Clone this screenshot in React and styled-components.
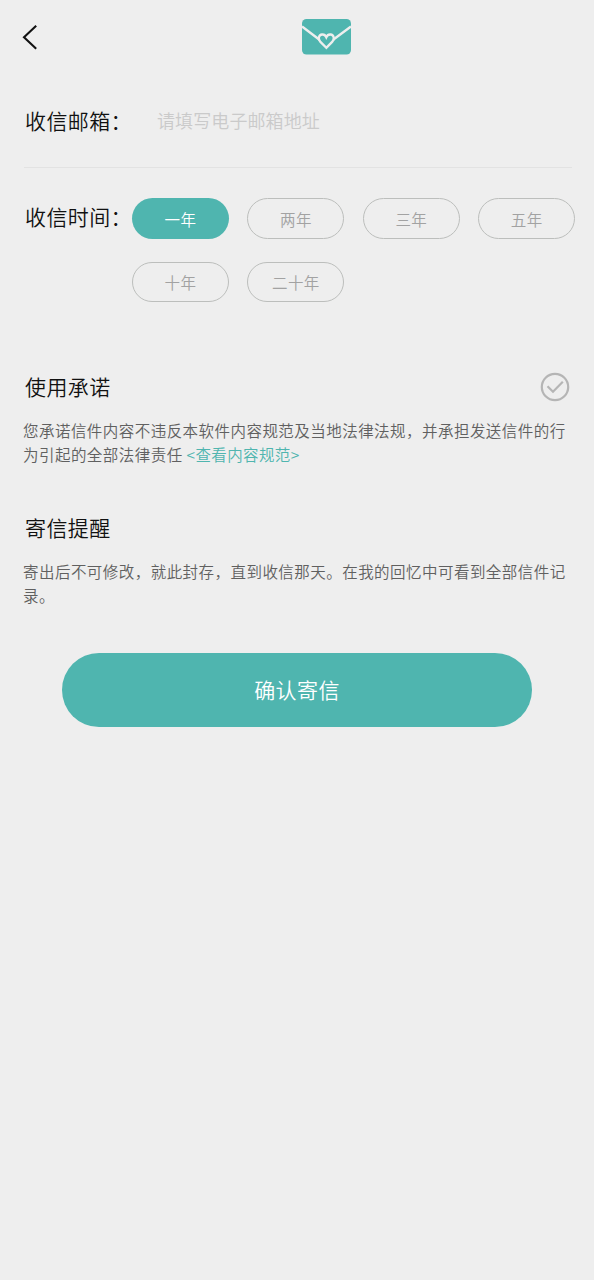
import React, { useState } from "react";
import styled, { createGlobalStyle } from "styled-components";

const GlobalStyle = createGlobalStyle`
  * {
    box-sizing: border-box;
  }
  body {
    margin: 0;
    background-color: #eeeeee;
    font-family: "Noto Sans CJK SC", sans-serif;
  }
`;
const Container = styled.div`
  min-height: 1280px;
  background-color: #eeeeee;
  font-weight: 350;
`;
const Header = styled.header`
  height: 74px;
  display: flex;
  padding: 18px 0 0 22px;
`;
const Back = styled.svg`
  width: 16px;
  height: 28px;
  margin: 5px 264px 0 0;
  cursor: pointer;
`;
const Logo = styled.svg`
  width: 49px;
  height: 37px;
`;
const EmailRow = styled.div`
  height: 94px;
  margin: 0 22px 0 24px;
  padding-bottom: 2px;
  display: flex;
  align-items: center;
  border-bottom: 1px solid #e2e2e2;
`;
const Label = styled.span`
  width: 108px;
  flex: none;
  padding-left: 1px;
  font-size: 21px;
  line-height: 32px;
  letter-spacing: 0.4px;
  white-space: nowrap;
  color: #111;
`;
const Input = styled.input`
  width: 300px;
  height: 32px;
  margin-left: 25px;
  padding: 0;
  border: none;
  outline: none;
  background: transparent;
  font-family: inherit;
  font-size: 18px;
  font-weight: inherit;
  letter-spacing: 0.1px;
  color: #333;
  &::placeholder {
    color: #cacaca;
  }
`;
const TimeRow = styled.div`
  display: flex;
  padding: 30px 0 0 24px;
`;
const TimeLabel = styled(Label)`
  padding-top: 2px;
`;
const Options = styled.div`
  display: grid;
  grid-template-columns: repeat(4, 97px);
  grid-template-rows: 41px 40px;
  gap: 23px 18.4px;
`;
const Option = styled.button`
  padding: 0;
  border: ${(props) => (props.$active ? "none" : "1px solid #bcbebc")};
  border-radius: 21px;
  background-color: ${(props) => (props.$active ? "#4fb5af" : "transparent")};
  color: ${(props) => (props.$active ? "#fff" : "#a2a2a2")};
  font-family: inherit;
  font-size: 15.5px;
  font-weight: inherit;
  letter-spacing: 0.4px;
  cursor: pointer;
`;
const Section = styled.section`
  height: 141px;
  padding: 0 24px 0 23px;
`;
const Sections = styled.div`
  padding-top: 67.5px;
  padding-bottom: 1.5px;
`;
const TitleRow = styled.div`
  height: 34px;
  display: flex;
  align-items: center;
  justify-content: space-between;
`;
const Title = styled.h2`
  margin: 0;
  padding: 0 0 2px 2px;
  font-size: 21px;
  font-weight: inherit;
  line-height: 32px;
  letter-spacing: 0.4px;
  color: #111;
`;
const Check = styled.svg`
  width: 30px;
  height: 30px;
  cursor: pointer;
`;
const Text = styled.p`
  margin: 14.5px 0 0;
  font-size: 15.5px;
  line-height: 24px;
  letter-spacing: 0.46px;
  color: #606060;
`;
const Rules = styled.span`
  color: #4fb5af;
  letter-spacing: 0.38px;
  cursor: pointer;
`;
const Submit = styled.button`
  display: block;
  width: 470px;
  height: 74px;
  margin: 0 0 0 62px;
  padding: 0 0 2px;
  border: none;
  border-radius: 37px;
  background-color: #4fb5af;
  color: #fff;
  font-family: inherit;
  font-size: 21px;
  font-weight: inherit;
  letter-spacing: 0.4px;
  cursor: pointer;
`;

const years = ["一年", "两年", "三年", "五年", "十年", "二十年"];

function App() {
  const [year, setYear] = useState("一年");
  const [email, setEmail] = useState("");

  return (
    <>
      <GlobalStyle />
      <Container lang="zh-CN">
        <Header>
          <Back viewBox="0 0 16 28" fill="none">
            <path d="M14.2 2.8L2 14.3L14.2 25.8" stroke="#111" strokeWidth="2.1" />
          </Back>
          <Logo viewBox="0 0 49 37">
            <rect y="1" width="49" height="35.5" rx="4.5" fill="#4fb5af" />
            <path
              d="M0 8.4L17.5 21.8M49 8.4L31.1 21.8"
              fill="none"
              stroke="#eeeeee"
              strokeWidth="2.4"
            />
            <path
              d="M24.3 29.8L18.2 23.6C15.6 20.6 17 16.8 20 16.5C22 16.3 23.6 17.6 24.3 19.2C25 17.6 26.6 16.3 28.6 16.5C31.6 16.8 33 20.6 30.4 23.6Z"
              fill="#4fb5af"
              stroke="#eeeeee"
              strokeWidth="2.3"
            />
          </Logo>
        </Header>
        <EmailRow>
          <Label>收信邮箱：</Label>
          <Input
            placeholder="请填写电子邮箱地址"
            value={email}
            onChange={(e) => setEmail(e.target.value)}
          />
        </EmailRow>
        <TimeRow>
          <TimeLabel>收信时间：</TimeLabel>
          <Options>
            {years.map((item) => (
              <Option key={item} $active={item === year} onClick={() => setYear(item)}>
                {item}
              </Option>
            ))}
          </Options>
        </TimeRow>
        <Sections>
          <Section>
            <TitleRow>
              <Title>使用承诺</Title>
              <Check viewBox="0 0 30 30" fill="none" stroke="#b5b5b5">
                <circle cx="15" cy="15" r="13.2" strokeWidth="2.2" />
                <path d="M7.5 14.3L13 19.8L22.8 9.8" strokeWidth="2.2" />
              </Check>
            </TitleRow>
            <Text>
              您承诺信件内容不违反本软件内容规范及当地法律法规，并承担发送信件的行为引起的全部法律责任{" "}
              <Rules>&lt;查看内容规范&gt;</Rules>
            </Text>
          </Section>
          <Section>
            <TitleRow>
              <Title>寄信提醒</Title>
            </TitleRow>
            <Text>
              寄出后不可修改，就此封存，直到收信那天。在我的回忆中可看到全部信件记录。
            </Text>
          </Section>
        </Sections>
        <Submit>确认寄信</Submit>
      </Container>
    </>
  );
}

export default App;
